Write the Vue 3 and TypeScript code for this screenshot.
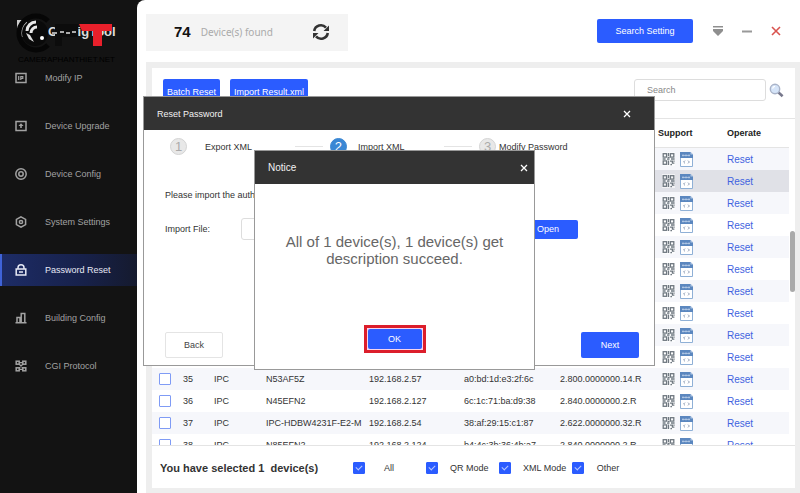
<script setup lang="ts">
import { ref } from 'vue'

interface Device {
  no: number
  type: string
  model: string
  ip: string
  mac: string
  version: string
  checked: boolean
}

const nav = [
  { id: 'ip', label: 'Modify IP' },
  { id: 'upgrade', label: 'Device Upgrade' },
  { id: 'config', label: 'Device Config' },
  { id: 'system', label: 'System Settings' },
  { id: 'password', label: 'Password Reset' },
  { id: 'building', label: 'Building Config' },
  { id: 'cgi', label: 'CGI Protocol' },
]
const active = 'password'

const known: Record<number, string[]> = {
  35: ['N53AF5Z', '192.168.2.57', 'a0:bd:1d:e3:2f:6c', '2.800.0000000.14.R'],
  36: ['N45EFN2', '192.168.2.127', '6c:1c:71:ba:d9:38', '2.840.0000000.2.R'],
  37: ['IPC-HDBW4231F-E2-M', '192.168.2.54', '38:af:29:15:c1:87', '2.622.0000000.32.R'],
  38: ['N85EFN2', '192.168.2.124', 'b4:4c:3b:36:4b:a7', '2.840.0000000.2.R'],
}

const devices = ref<Device[]>(
  Array.from({ length: 14 }, (_, i) => {
    const no = 25 + i
    const [model = '', ip = '', mac = '', version = ''] = known[no] ?? []
    return { no, type: 'IPC', model, ip, mac, version, checked: no === 26 }
  }),
)

const modes = ref([
  { id: 'all', label: 'All', on: true },
  { id: 'qr', label: 'QR Mode', on: true },
  { id: 'xml', label: 'XML Mode', on: true },
  { id: 'other', label: 'Other', on: true },
])

const keyword = ref('')
const importFile = ref('')
</script>

<template>
  <div class="app">
    <aside class="sidebar">
      <div class="brand">
        <span class="brand-name">ConfigTool</span>
        <svg class="brand-mark" width="100" height="46" viewBox="0 0 100 46" aria-hidden="true">
          <path d="M1 7h10v17H1z" fill="#ccc" />
          <circle cx="19" cy="20" r="13" fill="#0a0a0a" />
          <path d="M32 8a17 17 0 1 0 0 24" fill="none" stroke="#060606" stroke-width="5" />
          <path d="M11 18a9 9 0 0 1 9-9M15 20a6 6 0 0 1 6-6" fill="none" stroke="#e8e8e8" stroke-width="3" />
          <path d="M10 20l3 6 5 3-4-7z" fill="#ddd" />
          <circle cx="26" cy="25" r="2" fill="#fff" />
          <path d="M39 11h23v13H46v9h-7z" fill="#0c0c0c" />
          <path d="M36 20h5M44 19h4M50 20h4M56 19h4" stroke="#aaa" stroke-width="2" />
          <path d="M63 11h33v7H86v15h-9V18H66z" fill="#e9202b" />
        </svg>
        <span class="brand-site">CAMERAPHANTHIET.NET</span>
      </div>
      <nav class="nav">
        <a v-for="n in nav" :key="n.id" href="#" class="nav-item" :class="{ active: n.id === active }">
          <svg class="nav-icon" width="12" height="12" viewBox="0 0 12 12" fill="none" stroke="currentColor" stroke-width="1.5" aria-hidden="true">
            <template v-if="n.id === 'ip'">
              <rect x="1" y="1.5" width="10" height="9" />
              <path d="M3.7 4v4M5.8 8V4.5h2v1.8h-2" stroke-width="1.2" />
            </template>
            <template v-else-if="n.id === 'upgrade'">
              <rect x="1" y="1.5" width="10" height="9" />
              <path d="M6 3.2L8.6 6H6.8v2H5.2V6H3.4z" fill="currentColor" stroke="none" />
            </template>
            <template v-else-if="n.id === 'config'">
              <circle cx="6" cy="6" r="5.2" />
              <circle cx="6" cy="6" r="2.2" />
            </template>
            <template v-else-if="n.id === 'system'">
              <path d="M6 .8l4.6 2.6v5.2L6 11.2 1.4 8.6V3.4z" />
              <circle cx="6" cy="6" r="1.6" />
            </template>
            <template v-else-if="n.id === 'password'">
              <rect x="1.2" y="5" width="9.6" height="6" />
              <path d="M3 5V3.8a3 3 0 0 1 6 0V5M4 8h4" />
            </template>
            <template v-else-if="n.id === 'building'">
              <path d="M.5 10.7h11M2 10.7V5.5h3v5.2M6.2 10.7V1.5h3.6v9.2" />
            </template>
            <template v-else>
              <rect x="1.2" y="1.2" width="3" height="3" />
              <rect x="7.8" y="1.2" width="3" height="3" />
              <rect x="1.2" y="7.8" width="3" height="3" />
              <rect x="7.8" y="7.8" width="3" height="3" />
              <path d="M4 2.700h4M4 9.300h4M4 4l4 4M8 4L4 8" stroke-width="1.200" />
            </template>
          </svg>
          <span>{{ n.label }}</span>
        </a>
      </nav>
    </aside>

    <main class="main">
      <header class="topbar">
        <div class="found">
          <strong>74</strong>
          <span class="found-label">Device(s) found</span>
          <button class="icon-btn refresh" type="button" aria-label="Refresh">
            <svg width="18" height="18" viewBox="0 0 18 18" fill="none" stroke="#333" stroke-width="2.6">
              <path d="M2.200 8A6.800 6.800 0 0 1 14 4.600" />
              <path d="M15.800 10A6.800 6.800 0 0 1 4 13.400" />
              <path d="M17 2.500V8h-5.500zM1 15.500V10h5.500z" fill="#333" stroke="none" />
            </svg>
          </button>
        </div>
        <div class="actions">
          <button class="btn search-setting" type="button">Search Setting</button>
          <button class="icon-btn" type="button" aria-label="Menu">
            <svg width="12" height="12" viewBox="0 0 12 12"><path d="M1 1h10v1.6H1zM1 4h10v2L6 11 1 6z" fill="#8f8f8f" /></svg>
          </button>
          <button class="icon-btn" type="button" aria-label="Minimize">
            <svg width="12" height="12" viewBox="0 0 12 12"><path d="M1 6.5h10" stroke="#999" stroke-width="2" /></svg>
          </button>
          <button class="icon-btn" type="button" aria-label="Close">
            <svg width="12" height="12" viewBox="0 0 12 12"><path d="M2 2l8 8M10 2l-8 8" stroke="#d9534f" stroke-width="1.6" /></svg>
          </button>
        </div>
      </header>

      <div class="stage">
        <section class="panel">
          <div class="toolbar">
            <button class="btn" type="button">Batch Reset</button>
            <button class="btn" type="button">Import Result.xml</button>
            <div class="search">
              <input v-model="keyword" class="field" type="text" placeholder="Search" aria-label="Search" />
              <button class="icon-btn" type="button" aria-label="Run search">
                <svg width="15" height="15" viewBox="0 0 15 15">
                  <path d="M9 9l4.6 4.2" stroke="#77788c" stroke-width="2.6" />
                  <circle cx="6" cy="6" r="4.7" fill="#d5e4f8" stroke="#a9b3c8" stroke-width="1.4" />
                  <path d="M3.6 5.6A2.6 2.6 0 0 1 6 3.4" fill="none" stroke="#fff" stroke-width="1.2" />
                </svg>
              </button>
            </div>
          </div>

          <div class="list">
            <div class="viewport">
              <table class="table">
                <thead>
                  <tr>
                    <th class="c-check"></th>
                    <th class="c-no"></th>
                    <th class="c-type"></th>
                    <th class="c-model"></th>
                    <th class="c-ip"></th>
                    <th class="c-mac"></th>
                    <th class="c-version"></th>
                    <th class="c-support">Support</th>
                    <th>Operate</th>
                  </tr>
                </thead>
                <tbody>
                  <tr v-for="d in devices" :key="d.no" :class="{ selected: d.checked }">
                    <td class="c-check"><input v-model="d.checked" class="box" type="checkbox" :aria-label="`Select device ${d.no}`" /></td>
                    <td>{{ d.no }}</td>
                    <td>{{ d.type }}</td>
                    <td>{{ d.model }}</td>
                    <td>{{ d.ip }}</td>
                    <td>{{ d.mac }}</td>
                    <td>{{ d.version }}</td>
                    <td>
                      <span class="support">
                        <svg width="13" height="14" viewBox="0 0 13 14" aria-hidden="true">
                          <rect width="13" height="14" fill="#fff" opacity=".6" />
                          <g fill="none" stroke="#6f7880" stroke-width="1.3">
                            <rect x="1.2" y="1.7" width="3.4" height="3.4" />
                            <rect x="8.4" y="1.7" width="3.4" height="3.4" />
                            <rect x="1.2" y="8.9" width="3.4" height="3.4" />
                            <path d="M6.5 1v3M5.6 5.5h2M.6 7h3M5 7.2h2.5M9 7h3.6M6.5 8.5v4.6M8 9.2h2.4v2h2M8.4 12.6h1.6M12 8.4v1.4" />
                          </g>
                        </svg>
                        <svg width="13" height="15" viewBox="0 0 13 15" aria-hidden="true">
                          <path d="M.5.5h10l2 2v12H.5z" fill="#fff" stroke="#8fb0d6" />
                          <path d="M0 0h10.5L13 2.6V6H0z" fill="#5b87bf" />
                          <path d="M10.5 0L13 2.6h-2.5z" fill="#b5cbe6" />
                          <path d="M2 3.400h8M3 2.400v2M6 2.400v2M9 2.400v2" fill="none" stroke="#c9d9ee" stroke-width=".7" />
                          <path d="M5 8.600L3.600 10 5 11.400M8 8.600L9.400 10 8 11.400" fill="none" stroke="#7f8faa" stroke-width=".9" />
                        </svg>
                      </span>
                    </td>
                    <td><a class="reset" href="#">Reset</a></td>
                  </tr>
                </tbody>
              </table>
            </div>
            <div class="track"><div class="thumb"></div></div>
          </div>

          <footer class="footer">
            <strong class="summary">You have selected 1&nbsp; device(s)</strong>
            <div class="modes">
              <label v-for="m in modes" :key="m.id" class="mode">
                <input v-model="m.on" class="box" type="checkbox" />
                <span class="mode-name">{{ m.label }}</span>
              </label>
            </div>
          </footer>
        </section>
      </div>
    </main>

    <section class="dialog wizard" role="dialog" aria-label="Reset Password">
      <header class="dialog-head">
        <h2>Reset Password</h2>
        <button class="icon-btn" type="button" aria-label="Close Reset Password">
          <svg width="8" height="8" viewBox="0 0 8 8"><path d="M1 1l6 6M7 1L1 7" stroke="#fff" stroke-width="1.3" /></svg>
        </button>
      </header>
      <div class="wizard-body">
        <ol class="steps">
          <li><span class="num">1</span><span class="step-name">Export XML</span></li>
          <li class="current"><span class="num">2</span><span class="step-name">Import XML</span></li>
          <li class="last"><span class="num">3</span><span class="step-name">Modify Password</span></li>
        </ol>
        <p class="hint">Please import the authorization file.</p>
        <div class="file-row">
          <label for="import-file">Import File:</label>
          <input id="import-file" v-model="importFile" class="field" type="text" />
          <button class="btn open" type="button">Open</button>
        </div>
        <div class="wizard-foot">
          <button class="btn plain" type="button">Back</button>
          <button class="btn" type="button">Next</button>
        </div>
      </div>
    </section>

    <section class="dialog notice" role="alertdialog" aria-label="Notice">
      <header class="dialog-head">
        <h2>Notice</h2>
        <button class="icon-btn" type="button" aria-label="Close Notice">
          <svg width="8" height="8" viewBox="0 0 8 8"><path d="M1 1l6 6M7 1L1 7" stroke="#fff" stroke-width="1.3" /></svg>
        </button>
      </header>
      <div class="notice-body">
        <p>All of 1 device(s), 1 device(s) get description succeed.</p>
        <div class="highlight"><button class="btn" type="button">OK</button></div>
      </div>
    </section>
  </div>
</template>

<style>
body {
  background: #131313;
}
</style>

<style scoped>
* {
  box-sizing: border-box;
}
.app {
  position: relative;
  display: flex;
  height: 100vh;
  overflow: hidden;
  background: #131313;
  color: #333;
  font: 9px/12px "Liberation Sans", Arial, sans-serif;
}
button,
input {
  font: inherit;
}
.sidebar {
  flex: none;
  width: 137px;
}
.brand {
  position: relative;
  height: 54px;
  padding: 23px 0 0 48px;
}
.brand-name {
  display: block;
  color: #ddd;
  font-size: 13px;
  font-weight: bold;
  line-height: 18px;
}
.brand-mark {
  position: absolute;
  left: 16px;
  top: 13px;
}
.brand-site {
  position: absolute;
  left: 18px;
  top: 54px;
  color: #000;
  font-size: 8px;
  line-height: 11px;
}
.nav {
  display: flex;
  flex-direction: column;
  gap: 16px;
  padding-top: 8px;
}
.nav-item {
  display: flex;
  align-items: center;
  gap: 18px;
  height: 32px;
  padding-left: 15px;
  color: #a2a2a2;
  text-decoration: none;
}
.nav-item.active {
  padding-left: 13px;
  border-left: 2px solid #3f63d8;
  background: linear-gradient(90deg, #1d2c66, #17214a 60%, #151a2e);
  color: #e6e9f5;
}
.main {
  flex: 1;
  display: flex;
  flex-direction: column;
  min-width: 0;
  padding-left: 9px;
  border-top-left-radius: 8px;
  background: #fff;
}
.topbar {
  display: flex;
  justify-content: space-between;
  align-items: center;
  height: 62px;
  padding-right: 18px;
}
.found {
  display: flex;
  align-items: center;
  width: 202px;
  height: 37px;
  margin-top: 2px;
  padding: 0 18px 0 28px;
  background: #f4f4f4;
}
.found strong {
  color: #111;
  font-size: 15px;
  line-height: 18px;
}
.found-label {
  flex: 1;
  margin-left: 10px;
  color: #aaa;
  font: 10px/14px "Noto Sans", sans-serif;
}
.icon-btn {
  display: flex;
  padding: 0;
  border: 0;
  background: none;
}
.actions {
  display: flex;
  align-items: center;
  gap: 17px;
}
.btn {
  height: 24px;
  padding: 0 4px;
  border: 0;
  border-radius: 2px;
  background: #2b5cff;
  color: #fff;
}
.search-setting {
  width: 96px;
  margin-right: 2px;
}
.stage {
  flex: 1;
  display: flex;
  min-height: 0;
  padding: 6px 5px 5px 6px;
  background: #eee;
}
.panel {
  flex: 1;
  display: flex;
  flex-direction: column;
  min-width: 0;
  background: #fff;
}
.toolbar {
  display: flex;
  align-items: flex-start;
  gap: 10px;
  height: 51px;
  padding: 11px 11px 0 11px;
  border-bottom: 1px solid #e4e4e4;
}
.toolbar .btn {
  height: 26px;
}
.search {
  display: flex;
  align-items: center;
  gap: 3px;
  margin-left: auto;
}
.field {
  height: 22px;
  padding: 0 12px;
  border: 1px solid #ddd;
  border-radius: 3px;
  background: #fff;
  color: #333;
}
.search .field {
  width: 132px;
}
.field::placeholder {
  color: #888;
}
.list {
  flex: 1;
  display: flex;
  min-height: 0;
  border-bottom: 1px solid #e4e4e4;
}
.viewport {
  flex: 1;
  overflow: hidden;
}
.table {
  width: 100%;
  border-collapse: separate;
  border-spacing: 0;
  table-layout: fixed;
}
th,
td {
  padding: 0;
  text-align: left;
  white-space: nowrap;
}
th {
  height: 29px;
  border-bottom: 1px solid #e4e4e4;
  color: #222;
}
td {
  height: 22px;
}
tbody tr:nth-child(odd) {
  background: #f6f7fb;
}
tbody tr.selected {
  background: #e0e1e7;
}
.c-check {
  width: 31px;
}
td.c-check {
  padding-left: 7px;
}
.c-no {
  width: 31px;
}
.c-type {
  width: 52px;
}
.c-model {
  width: 103px;
}
.c-ip {
  width: 95px;
}
.c-mac {
  width: 96px;
}
.c-version {
  width: 98px;
}
.c-support {
  width: 69px;
}
.box {
  appearance: none;
  display: block;
  flex: none;
  width: 12px;
  height: 12px;
  margin: 0;
  border: 1px solid #7f9bf5;
  border-radius: 1px;
  background: #fff;
}
.box:checked {
  border-color: #2b5cff;
  background: #2b5cff;
}
.box:checked::after {
  content: "";
  display: block;
  width: 5px;
  height: 3px;
  margin: 2px auto;
  border: solid #b9c8ff;
  border-width: 0 0 1px 1px;
  transform: rotate(-45deg);
}
.support {
  display: flex;
  align-items: center;
  gap: 5px;
  padding-left: 4px;
}
.reset {
  display: block;
  padding-top: 1px;
  color: #3f63e0;
  font-size: 10px;
  text-decoration: none;
}
.track {
  width: 6px;
  padding: 112px 0 0 1px;
}
.thumb {
  height: 61px;
  border-radius: 3px;
  background: #aaa;
}
.footer {
  display: flex;
  align-items: center;
  height: 42px;
  padding: 2px 0 0 8px;
}
.summary {
  width: 193px;
  font-size: 11px;
}
.modes {
  display: grid;
  grid-template-columns: repeat(4, 73px);
}
.mode {
  display: flex;
  align-items: center;
  gap: 12px;
}
.mode-name {
  min-width: 24px;
  text-align: center;
  white-space: nowrap;
}
.dialog {
  position: absolute;
  display: flex;
  flex-direction: column;
  border: 1px solid #999;
  background: #fff;
}
.dialog-head {
  display: flex;
  align-items: center;
  justify-content: space-between;
  height: 33px;
  padding: 0 23px 0 13px;
  background: #333;
  color: #f2f2f2;
}
.dialog-head h2 {
  margin: 0;
  font-size: 9px;
  font-weight: normal;
}
.wizard {
  left: 143px;
  top: 96px;
  width: 512px;
  height: 270px;
}
.wizard-body {
  flex: 1;
  display: flex;
  flex-direction: column;
  padding: 8px 15px 7px 21px;
}
.steps {
  display: flex;
  margin: 0;
  padding: 0 0 0 5px;
  list-style: none;
}
.steps li {
  display: flex;
  align-items: center;
  gap: 18px;
  width: 161px;
}
.steps li.current {
  gap: 11px;
  width: 150px;
}
.steps li.last {
  gap: 3px;
}
.steps li:not(.last)::after {
  content: "";
  width: 28px;
  height: 1px;
  margin-left: auto;
  margin-right: 7px;
  background: #e4e4e4;
}
.step-name {
  white-space: nowrap;
}
.num {
  flex: none;
  width: 17px;
  height: 17px;
  border: 1px solid #d4d4d4;
  border-radius: 50%;
  background: #e8e8e8;
  color: #aaa;
  font-size: 13px;
  line-height: 15px;
  text-align: center;
}
.current .num {
  border-color: #3a87d4;
  background: #3a87d4;
  color: #fff;
}
.hint {
  margin: 34px 0 0;
}
.file-row {
  display: flex;
  align-items: center;
  margin-top: 17px;
}
.file-row label {
  width: 76px;
}
.file-row .field {
  width: 270px;
}
.open {
  width: 60px;
  height: 19px;
  margin-left: 7px;
}
.wizard-foot {
  display: flex;
  justify-content: space-between;
  margin-top: auto;
}
.wizard-foot .btn {
  width: 58px;
  height: 26px;
}
.btn.plain {
  border: 1px solid #e4e4e4;
  background: #fff;
  color: #444;
}
.notice {
  left: 254px;
  top: 150px;
  width: 281px;
  height: 220px;
}
.notice .dialog-head {
  padding-right: 6px;
}
.notice .dialog-head h2 {
  font-size: 10px;
}
.notice-body {
  flex: 1;
  display: flex;
  flex-direction: column;
  align-items: center;
  padding: 49px 28px 16px;
}
.notice-body p {
  margin: 0;
  color: #666;
  font-size: 15px;
  line-height: 17px;
  text-align: center;
}
.highlight {
  margin-top: auto;
  padding: 1px;
  border: 3px solid #dc1e2b;
  background: #f6d5ee;
}
.highlight .btn {
  display: block;
  width: 54px;
  height: 20px;
}
</style>
